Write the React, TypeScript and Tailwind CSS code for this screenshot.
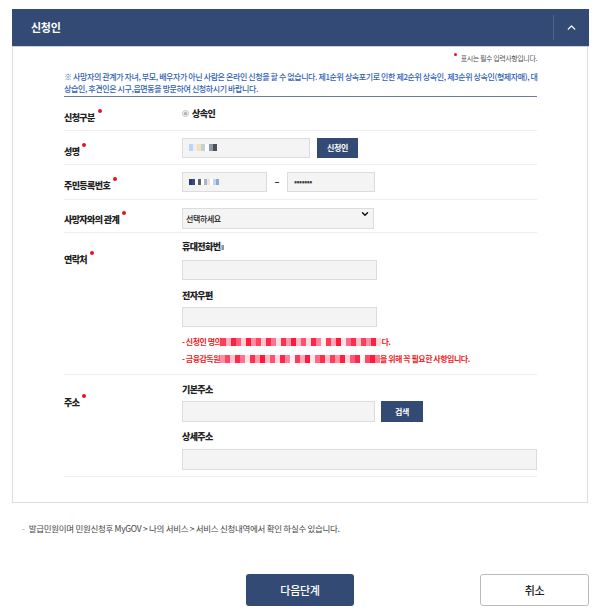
import React from "react";
import { ChevronUp, ChevronDown } from "lucide-react";

const Mosaic = ({ colors, size = 4, h = 7 }: { colors: string[]; size?: number; h?: number }) => (
  <span className="inline-flex align-middle">
    {colors.map((c, i) => (
      <span key={i} className="inline-block" style={{ width: size, height: h, background: c }} />
    ))}
  </span>
);

const Req = () => (
  <span className="relative -top-[8px] ml-[3px] inline-block h-[4px] w-[4px] rounded-full bg-[#e8141c]" />
);

const Label = ({ children }: { children: React.ReactNode }) => (
  <span className="text-[9px] font-extrabold tracking-[-0.6px] text-[#222]">
    {children}
    <Req />
  </span>
);

const inputCls = "h-[20px] border border-[#dcdcdc] bg-[#f4f4f4] text-[8px] px-[6px] outline-none";

const red1 = ["#ff3b55", "#ffb0c0", "#ff2040", "#ff6080", "#ffd0da", "#ff1f3c", "#ff8fa8", "#ff4560", "#ffc4cf", "#ff2a48", "#ff7290", "#ffe0e6", "#ff3050", "#ff98ad", "#ff1838", "#ffb8c6", "#ff5070", "#ffd8e0", "#ff2646", "#ff84a0", "#fff0f2", "#ff3b58", "#ffa8ba", "#ff1c3a", "#ffe6ea", "#ff6a88", "#ff2c4a", "#ffc0cc", "#ff3e5c", "#ff90a6", "#ff203e", "#ffd4dc", "#ff5878", "#ff2848", "#fff4f6", "#ff4a68", "#ff1a3a", "#ff7c98", "#ff3454", "#ffb4c2"];

export default function App() {
  return (
    <div className="min-h-[612px] w-[597px] bg-white font-['Noto_Sans_CJK_KR',sans-serif] text-[#222]">
      <div className="pl-[12px] pr-[8px] pt-[9px]">
        {/* header */}
        <div className="flex h-[38px] items-center justify-between border-b border-[#c9d1de] bg-[#334a74] pl-[19px]">
          <span className="text-[11px] font-bold tracking-[-0.3px] text-white">신청인</span>
          <div className="flex h-[25px] w-[36px] items-center justify-center border-l border-[#4f6389]">
            <ChevronUp size={13} strokeWidth={2.5} className="text-white" />
          </div>
        </div>

        {/* panel */}
        <div className="mr-[1px] border border-t-0 border-[#dddddd] pb-[25px] pl-[51px] pr-[50px] pt-[6px]">
          <div className="flex h-[10px] items-center justify-end text-[7px] tracking-[-0.4px] text-[#555]">
            <span className="relative -top-[4px] mr-[4px] inline-block h-[3px] w-[3px] rounded-full bg-[#e8141c]" />
            표시는 필수 입력사항입니다.
          </div>

          <div className="mt-[8px] whitespace-nowrap border-b border-[#6f7b96] pb-[1px] text-[8px] font-medium leading-[12px] tracking-[-0.4px] text-[#2f5fb3]">
            ※ 사망자의 관계가 자녀, 부모, 배우자가 아닌 사람은 온라인 신청을 할 수 없습니다. 제1순위 상속포기로 인한 제2순위 상속인, 제3순위 상속인(형제자매), 대
            <br />
            상습인, 후견인은 시구,읍면동을 방문하여 신청하시기 바랍니다.
          </div>

          {/* 신청구분 */}
          <div className="flex h-[34px] items-center border-b border-[#eeeeee]">
            <div className="w-[118px]">
              <Label>신청구분</Label>
            </div>
            <div className="flex items-center gap-[3px]">
              <span className="flex h-[7px] w-[7px] items-center justify-center rounded-full border border-[#c8c8c8] bg-[#eeeeee]">
                <span className="h-[3px] w-[3px] rounded-full bg-[#a8a8a8]" />
              </span>
              <span className="text-[9px] font-extrabold tracking-[-0.5px]">상속인</span>
            </div>
          </div>

          {/* 성명 */}
          <div className="flex h-[34px] items-center border-b border-[#eeeeee]">
            <div className="w-[118px]">
              <Label>성명</Label>
            </div>
            <div className="flex items-center gap-[7px]">
              <div className={`${inputCls} flex w-[128px] items-center`}>
                <Mosaic colors={["#bcd6ee", "#e8eef6", "#f2e3b0", "#c4cfe0", "#ffffff", "#8d97a8", "#4a4f5c"]} />
              </div>
              <button className="h-[20px] w-[41px] bg-[#334a74] text-[8px] font-bold tracking-[-0.4px] text-white">
                신청인
              </button>
            </div>
          </div>

          {/* 주민등록번호 */}
          <div className="flex h-[35px] items-center border-b border-[#eeeeee]">
            <div className="w-[118px]">
              <Label>주민등록번호</Label>
            </div>
            <div className="flex items-center">
              <div className={`${inputCls} flex w-[85px] items-center`}>
                <Mosaic
                  colors={["#2d3d73", "#3a4a80", "#ffffff", "#5a6070", "#ffffff", "#a8b4d0", "#f0e0d8", "#ffffff", "#c8d4ec", "#8aa8e0"]}
                  size={3}
                  h={6}
                />
              </div>
              <span className="w-[20px] text-center text-[9px] font-bold">–</span>
              <div className={`${inputCls} flex w-[88px] items-center text-[9px] tracking-[-0.5px] text-[#444]`}>
                •••••••
              </div>
            </div>
          </div>

          {/* 사망자와의 관계 */}
          <div className="flex h-[33px] items-center border-b border-[#eeeeee]">
            <div className="w-[118px]">
              <Label>사망자와의 관계</Label>
            </div>
            <div className="relative">
              <select className="h-[21px] w-[192px] appearance-none border border-[#dcdcdc] bg-[#f4f4f4] pl-[3px] text-[8px] font-medium tracking-[-0.4px] text-[#222] outline-none">
                <option>선택하세요</option>
              </select>
              <ChevronDown
                size={10}
                strokeWidth={3.5}
                className="pointer-events-none absolute right-[4px] top-[6px] text-[#111]"
              />
            </div>
          </div>

          {/* 연락처 */}
          <div className="flex border-b border-[#eeeeee] pb-[7px] pt-[9px]">
            <div className="w-[118px] pt-[2px]">
              <Label>연락처</Label>
            </div>
            <div className="flex flex-col">
              <div className="flex h-[10px] items-center text-[9px] font-extrabold tracking-[-0.6px]">
                휴대전화번
                <Mosaic colors={["#9ac4ec", "#8a96a8"]} size={2} h={5} />
              </div>
              <div className={`${inputCls} mt-[8px] w-[195px]`} />
              <div className="mt-[11px] flex h-[10px] items-center text-[9px] font-extrabold tracking-[-0.6px]">전자우편</div>
              <div className={`${inputCls} mt-[6px] w-[195px]`} />
              <div className="mt-[6px] flex h-[17px] items-center whitespace-nowrap text-[8px] font-bold tracking-[-0.5px] text-[#ee1c25]">
                -&nbsp;신청인 명의
                <Mosaic colors={red1.slice(0, 32)} size={5} h={8} />
                다.
              </div>
              <div className="flex h-[17px] items-center whitespace-nowrap text-[8px] font-bold tracking-[-0.5px] text-[#ee1c25]">
                -&nbsp;금융감독원
                <Mosaic colors={red1.slice(6, 38)} size={5} h={8} />을 위해 꼭 필요한 사항입니다.
              </div>
            </div>
          </div>

          {/* 주소 */}
          <div className="flex border-b border-[#eeeeee] pb-[6px] pt-[10px]">
            <div className="w-[118px] pt-[2px]">
              <Label>주소</Label>
            </div>
            <div className="flex flex-1 flex-col">
              <div className="flex h-[10px] items-center text-[9px] font-extrabold tracking-[-0.6px]">기본주소</div>
              <div className="mt-[6px] flex items-center gap-[6px]">
                <div className={`${inputCls} h-[21px] w-[193px]`} />
                <button className="h-[21px] w-[42px] bg-[#334a74] text-[8px] font-bold tracking-[-0.4px] text-white">
                  검색
                </button>
              </div>
              <div className="mt-[10px] flex h-[10px] items-center text-[9px] font-extrabold tracking-[-0.6px]">상세주소</div>
              <div className={`${inputCls} mt-[7px] h-[21px] w-full`} />
            </div>
          </div>
        </div>
      </div>

      {/* bottom note */}
      <div className="mt-[19px] flex h-[12px] items-center pl-[22px] text-[8.5px] tracking-[-0.3px] text-[#444]">
        <span className="mr-[4px] text-[#999]">-</span>
        발급민원이며 민원신청후 MyGOV &gt; 나의 서비스 &gt; 서비스 신청내역에서 확인 하실수 있습니다.
      </div>

      {/* buttons */}
      <div className="mt-[40px] flex gap-[126px] pl-[246px]">
        <button className="h-[32px] w-[108px] rounded-[3px] bg-[#334a74] text-[11px] font-medium tracking-[-0.3px] text-white">
          다음단계
        </button>
        <button className="h-[32px] w-[109px] rounded-[3px] border border-[#bbbbbb] bg-white text-[11px] font-medium tracking-[-0.3px] text-[#222]">
          취소
        </button>
      </div>
    </div>
  );
}
